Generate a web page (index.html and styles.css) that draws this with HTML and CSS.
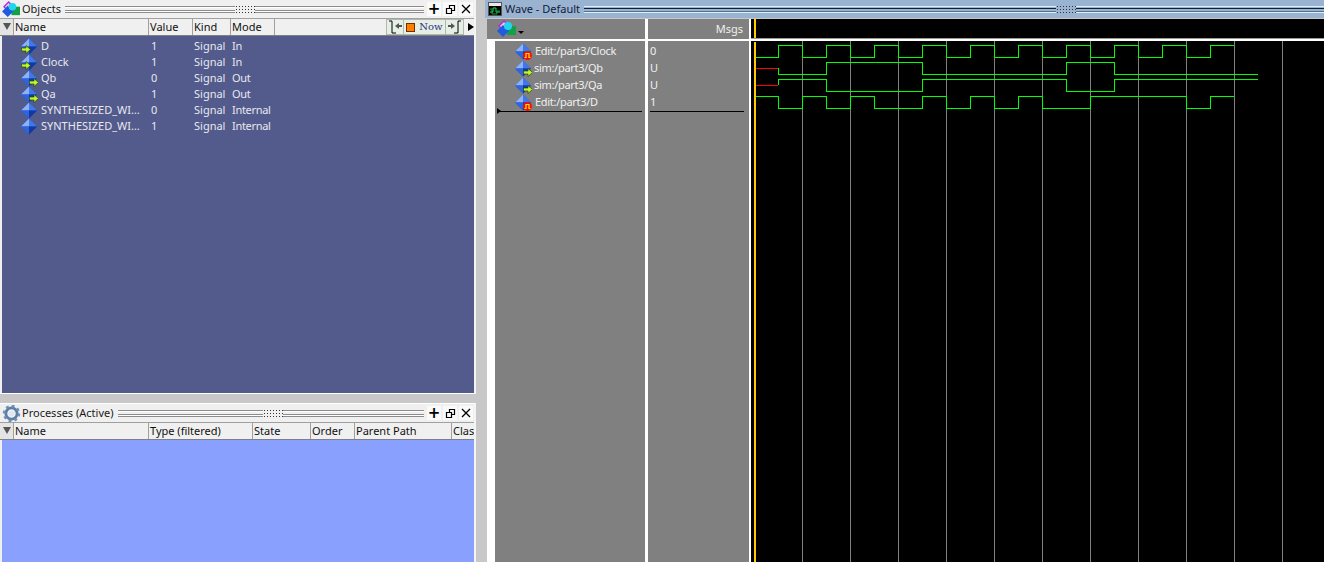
FILE: index.html
```html
<!DOCTYPE html>
<html>
<head>
	<title>Objects, Processes and Wave</title>
	<link rel="stylesheet" href="styles.css">
</head>
<body>
	<svg class="defs" width="0" height="0">
		<defs>
			<symbol id="diamond" viewBox="0 0 17 17">
				<polygon points="0,9 8,1 16,9 8,17" fill="#1d4fd0"/>
				<polygon points="8,1 16,9 8,9" fill="#3f78ee"/>
				<polygon points="0,9 8,1 8,9" fill="#8db2f6"/>
				<polygon points="0,9 8,9 8,17" fill="#2f63e0"/>
				<polygon points="8,9 16,9 8,17" fill="#123a9e"/>
			</symbol>
			<symbol id="arrow" viewBox="0 0 10 9">
				<path d="M0.500 3h4.500v-2.500l4.500 4-4.500 4v-2.500h-4.500z" fill="#c4f428" stroke="#1c4a08" stroke-width="0.700"/>
			</symbol>
			<symbol id="pulse" viewBox="0 0 9 9">
				<circle cx="4.500" cy="4.500" r="4.500" fill="#f01010"/>
				<path d="M1.500 6.500h1.500v-4h3v4h1.500" fill="none" stroke="#ffe000" stroke-width="1.200"/>
			</symbol>
			<symbol id="logo" viewBox="0 0 20 18">
				<polygon points="1,6 7,0 13,6 7,12" fill="#b32bd6"/>
				<polygon points="3,6 7,2 11,6 7,10" fill="#e8c4f2"/>
				<rect x="10" y="6" width="9" height="9" fill="#14a04a"/>
				<polygon points="0,11 6,5 12,11 6,17" fill="#1f5be0"/>
				<circle cx="11" cy="6" r="4" fill="#22d4ee"/>
			</symbol>
		</defs>
	</svg>

	<div class="left">
		<div class="panel objects">
			<div class="titlebar">
				<svg class="title-icon"><use href="#logo"/></svg>
				<span class="title">Objects</span>
				<div class="lines short"></div>
				<div class="dots"></div>
				<div class="lines"></div>
				<div class="btns">
					<span class="btn plus">+</span>
					<span class="btn"><svg width="11" height="11" viewBox="0 0 11 11"><path d="M1.500 4.500h5v5h-5zM4.500 4v-2.500h5v5h-3" fill="none" stroke="#000" stroke-width="1.200"/></svg></span>
					<span class="btn"><svg width="10" height="10" viewBox="0 0 10 10"><path d="M1 1l8 8M9 1l-8 8" fill="none" stroke="#000" stroke-width="1.300"/></svg></span>
				</div>
			</div>
			<div class="header">
				<span class="menu-cell"><i class="tri"></i></span>
				<span class="col c-name">Name</span>
				<span class="col c-value">Value</span>
				<span class="col c-kind">Kind</span>
				<span class="col c-mode">Mode</span>
				<div class="now-tools">
					<span class="tool"><svg width="14" height="14" viewBox="0 0 14 14"><path d="M1 1h3v12h4" fill="none" stroke="#000"/><path d="M7 6l4-3v2h3v2h-3v2z" fill="#555"/></svg></span>
					<span class="tool now"><i class="stop"></i>Now</span>
					<span class="tool"><svg width="14" height="14" viewBox="0 0 14 14"><path d="M13 1h-3v12h-4" fill="none" stroke="#000"/><path d="M7 6l-4-3v2h-3v2h3v2z" fill="#555"/></svg></span>
				</div>
				<i class="more"></i>
			</div>
			<div class="list">
				<div class="row"><svg class="sig"><use href="#diamond"/><use href="#arrow" x="0" y="8" width="10" height="9"/></svg><span class="c-name">D</span><span class="c-value">1</span><span class="c-kind">Signal</span><span>In</span></div>
				<div class="row"><svg class="sig"><use href="#diamond"/><use href="#arrow" x="0" y="8" width="10" height="9"/></svg><span class="c-name">Clock</span><span class="c-value">1</span><span class="c-kind">Signal</span><span>In</span></div>
				<div class="row"><svg class="sig"><use href="#diamond"/><use href="#arrow" x="8" y="9" width="10" height="9"/></svg><span class="c-name">Qb</span><span class="c-value">0</span><span class="c-kind">Signal</span><span>Out</span></div>
				<div class="row"><svg class="sig"><use href="#diamond"/><use href="#arrow" x="8" y="9" width="10" height="9"/></svg><span class="c-name">Qa</span><span class="c-value">1</span><span class="c-kind">Signal</span><span>Out</span></div>
				<div class="row"><svg class="sig"><use href="#diamond"/></svg><span class="c-name">SYNTHESIZED_WI…</span><span class="c-value">0</span><span class="c-kind">Signal</span><span>Internal</span></div>
				<div class="row"><svg class="sig"><use href="#diamond"/></svg><span class="c-name">SYNTHESIZED_WI…</span><span class="c-value">1</span><span class="c-kind">Signal</span><span>Internal</span></div>
			</div>
		</div>

		<div class="panel processes">
			<div class="titlebar">
				<svg class="title-icon" viewBox="0 0 18 18">
					<circle cx="9" cy="9" r="6" fill="none" stroke="#5b7fa8" stroke-width="3"/>
					<circle cx="9" cy="9" r="8" fill="none" stroke="#6f8fb4" stroke-width="2.500" stroke-dasharray="3 3.280"/>
					<circle cx="9" cy="9" r="3" fill="#dfe8f2"/>
				</svg>
				<span class="title">Processes (Active)</span>
				<div class="lines short2"></div>
				<div class="dots"></div>
				<div class="lines"></div>
				<div class="btns">
					<span class="btn plus">+</span>
					<span class="btn"><svg width="11" height="11" viewBox="0 0 11 11"><path d="M1.500 4.500h5v5h-5zM4.500 4v-2.500h5v5h-3" fill="none" stroke="#000" stroke-width="1.200"/></svg></span>
					<span class="btn"><svg width="10" height="10" viewBox="0 0 10 10"><path d="M1 1l8 8M9 1l-8 8" fill="none" stroke="#000" stroke-width="1.300"/></svg></span>
				</div>
			</div>
			<div class="header">
				<span class="menu-cell"><i class="tri"></i></span>
				<span class="col c-name">Name</span>
				<span class="col c-type">Type (filtered)</span>
				<span class="col c-state">State</span>
				<span class="col c-order">Order</span>
				<span class="col c-path">Parent Path</span>
				<span class="col c-class">Clas</span>
			</div>
			<div class="list"></div>
		</div>
	</div>

	<div class="wave">
		<div class="titlebar wave-title">
			<svg class="wave-icon" viewBox="0 0 14 14">
				<rect x="0.500" y="0.500" width="13" height="13" fill="#000" stroke="#555"/>
				<rect x="1" y="1" width="12" height="3" fill="#e8e8e8"/>
				<path d="M2 10h3v-4h3v4h4" fill="none" stroke="#20e060"/>
				<path d="M2 7h2v5h5v-3h3" fill="none" stroke="#10a040"/>
			</svg>
			<span class="title">Wave - Default</span>
			<div class="lines blue wave-short"></div>
			<div class="dots"></div>
			<div class="lines blue"></div>
		</div>
		<div class="wave-body">
			<div class="names">
				<div class="wave-head">
					<svg class="head-logo"><use href="#logo"/></svg>
					<i class="head-arrow"></i>
				</div>
				<div class="names-list">
					<div class="wave-row"><svg class="sig"><use href="#diamond"/><use href="#pulse" x="8" y="9" width="9" height="9"/></svg><span class="edit">Edit:/part3/Clock</span></div>
					<div class="wave-row"><svg class="sig"><use href="#diamond"/><use href="#arrow" x="8" y="9" width="10" height="9"/></svg><span>sim:/part3/Qb</span></div>
					<div class="wave-row"><svg class="sig"><use href="#diamond"/><use href="#arrow" x="8" y="9" width="10" height="9"/></svg><span>sim:/part3/Qa</span></div>
					<div class="wave-row"><svg class="sig"><use href="#diamond"/><use href="#pulse" x="8" y="9" width="9" height="9"/></svg><span class="edit">Edit:/part3/D</span></div>
					<div class="names-end"><i class="end-tri"></i></div>
				</div>
			</div>
			<div class="msgs">
				<div class="wave-head msgs-head">Msgs</div>
				<div class="msgs-list">
					<div class="msg-row">0</div>
					<div class="msg-row">U</div>
					<div class="msg-row">U</div>
					<div class="msg-row">1</div>
					<div class="msgs-end"></div>
				</div>
			</div>
			<svg class="plot" width="573" height="543" viewBox="751 19 573 543" shape-rendering="crispEdges">
				<g stroke="#808080" fill="none">
					<path d="M802.500 41V562M850.500 41V562M898.500 41V562M946.500 41V562M994.500 41V562M1042.500 41V562M1090.500 41V562M1138.500 41V562M1186.500 41V562M1234.500 41V562M1282.500 41V562"/>
				</g>
				<rect x="751" y="38" width="573" height="1" fill="#9a9a9a"/>
				<rect x="751" y="39" width="573" height="2" fill="#fff"/>
				<rect x="754" y="19" width="2" height="19" fill="#ffc800"/>
				<rect x="754" y="42" width="2" height="520" fill="#ffc800"/>
				<g fill="none" stroke="#00ff00">
					<path d="M756 57.500H778.500V45.500H802.500V57.500H826.500V45.500H850.500V57.500H874.500V45.500H898.500V57.500H922.500V45.500H946.500V57.500H970.500V45.500H994.500V57.500H1018.500V45.500H1042.500V57.500H1066.500V45.500H1090.500V57.500H1114.500V45.500H1138.500V57.500H1162.500V45.500H1186.500V57.500H1210.500V45.500H1234"/>
					<path d="M778.500 68V74.500H826.500V62.500H922.500V74.500H1066.500V62.500H1114.500V74.500H1258"/>
					<path d="M778.500 85V79.500H826.500V91.500H922.500V79.500H1066.500V91.500H1114.500V79.500H1258"/>
					<path d="M756 96.500H778.500V108.500H802.500V96.500H826.500V108.500H850.500V96.500H874.500V108.500H922.500V96.500H946.500V108.500H970.500V96.500H994.500V108.500H1018.500V96.500H1042.500V108.500H1090.500V96.500H1186.500V108.500H1210.500V96.500H1234"/>
				</g>
				<path d="M756 68.500H778M756 85.500H778" fill="none" stroke="#ff0000"/>
			</svg>
		</div>
	</div>
</body>
</html>
```

FILE: styles.css
```css
* {
	box-sizing: border-box;
}

body {
	margin: 0;
	height: 562px;
	overflow: hidden;
	display: flex;
	background: #c8c8c8;
	font-family: "Noto Sans", sans-serif;
	font-size: 11px;
	line-height: 16px;
}

.defs {
	display: block;
	width: 0;
	height: 0;
}

.left {
	width: 476px;
	height: 562px;
	flex: none;
	display: flex;
	flex-direction: column;
	margin-right: 9px;
}

.panel {
	display: flex;
	flex-direction: column;
	width: 476px;
	border-right: 2px solid #f4f4f4;
}

.objects {
	height: 394px;
	background: #f0f0f0;
	border-bottom: 1px solid #fff;
}

.processes {
	height: 159px;
	margin-top: 9px;
	background: #f0f0f0;
	border-top: 1px solid #fff;
}

.titlebar {
	height: 18px;
	flex: none;
	display: flex;
	align-items: center;
	background: #f0f0f0;
	color: #1a1a1a;
}

.title-icon {
	width: 19px;
	height: 17px;
	margin-left: 2px;
	flex: none;
}

.title {
	margin-left: 1px;
	margin-right: 4px;
	font-size: 11px;
	white-space: nowrap;
}

.lines {
	flex: 1;
	height: 7px;
	border-top: 1px solid #8c8c8c;
	border-bottom: 1px solid #8c8c8c;
	background: linear-gradient(#fff 0 1px, #f0f0f0 1px 3px, #8c8c8c 3px 4px, #fff 4px);
}

.short {
	flex: none;
	width: 170px;
}

.short2 {
	flex: none;
	width: 145px;
}

.dots {
	width: 20px;
	height: 9px;
	flex: none;
	background: radial-gradient(circle, #333 0 0.7px, transparent 0.8px) 0 0 / 3px 3px;
}

.btns {
	display: flex;
	gap: 2px;
	margin-left: 3px;
	margin-right: 1px;
}

.btn {
	width: 14px;
	height: 14px;
	display: flex;
	align-items: center;
	justify-content: center;
	background: #fafafa;
	color: #000;
}

.plus {
	font-family: "DejaVu Sans", sans-serif;
	font-size: 15px;
	font-weight: bold;
}

.header {
	height: 18px;
	flex: none;
	display: flex;
	align-items: center;
	background: #f0f0f0;
	border-top: 1px solid #a0a0a0;
	border-bottom: 1px solid #808080;
	color: #101010;
}

.menu-cell {
	width: 14px;
	height: 100%;
	flex: none;
	padding: 4px 0 0 3px;
	background: #e4e4e4;
	border-right: 1px solid #a0a0a0;
}

.tri {
	display: block;
	width: 0;
	height: 0;
	border-left: 4px solid transparent;
	border-right: 4px solid transparent;
	border-top: 7px solid #555;
}

.col {
	height: 100%;
	flex: none;
	padding-left: 1px;
	border-right: 1px solid #a0a0a0;
	white-space: nowrap;
	overflow: hidden;
}

.header .c-name { width: 135px; }
.header .c-value { width: 44px; }
.header .c-kind { width: 38px; }
.header .c-mode { width: 44px; }
.header .c-type { width: 104px; }
.header .c-state { width: 58px; }
.header .c-order { width: 44px; }
.header .c-path { width: 97px; }
.header .c-class { width: 22px; border-right: 0; }

.now-tools {
	display: flex;
	height: 16px;
	margin-left: 111px;
	background: #e6efe6;
	border: 1px solid #b0b8b0;
}

.tool {
	display: flex;
	align-items: center;
	justify-content: center;
	width: 17px;
	border-right: 1px solid #b0b8b0;
}

.tool:last-child {
	border-right: 0;
}

.now {
	width: 42px;
	gap: 4px;
	color: #303080;
	font-family: "DejaVu Serif", serif;
	font-size: 10px;
}

.stop {
	width: 9px;
	height: 9px;
	background: #ff8000;
	border: 1px solid #703000;
}

.more {
	width: 0;
	height: 0;
	margin-left: 4px;
	border-top: 4px solid transparent;
	border-bottom: 4px solid transparent;
	border-left: 6px solid #000;
}

.list {
	flex: 1;
	margin-left: 2px;
}

.objects .list {
	padding-top: 2px;
	background: #525b8c;
	color: #e8e8ee;
}

.processes .list {
	background: #8aa0ff;
}

.row {
	height: 16px;
	display: grid;
	grid-template-columns: 39px 110px 43px 38px 1fr;
	white-space: nowrap;
}

.row span:last-child {
	letter-spacing: -0.3px;
}

.row .sig {
	margin: -1px 0 0 19px;
}

.sig {
	width: 17px;
	height: 18px;
	flex: none;
}

.wave {
	flex: 1;
	height: 562px;
	display: flex;
	flex-direction: column;
	background: #fff;
}

.wave-title {
	height: 18px;
	background: #9ab3d0;
	color: #10203a;
}

.wave-icon {
	width: 14px;
	height: 14px;
	margin-left: 3px;
	flex: none;
}

.wave-title .title {
	margin-left: 3px;
}

.lines.blue {
	height: 7px;
	border-top: 1px solid #d8f0ff;
	border-bottom: 1px solid #d8f0ff;
	background: linear-gradient(#9ab3d0 0 1px, #10203a 1px 2px, #9ab3d0 2px 4px, #5a7088 4px 5px);
}

.wave-short {
	flex: none;
	width: 472px;
}

.wave-body {
	flex: 1;
	display: flex;
	border-top: 1px solid #c8c8c8;
}

.names {
	width: 160px;
	flex: none;
	border-left: 2px solid #c8c8c8;
}

.msgs {
	width: 101px;
	flex: none;
	margin-left: 3px;
}

.plot {
	flex: none;
	margin-left: 2px;
	background: #000;
	display: block;
}

.wave-head {
	height: 22px;
	display: flex;
	align-items: center;
	background: #808080;
	border-bottom: 2px solid #fff;
	color: #f0f0f0;
}

.head-logo {
	width: 20px;
	height: 18px;
	margin-left: 10px;
}

.head-arrow {
	width: 0;
	height: 0;
	margin: 6px 0 0 1px;
	border-left: 3px solid transparent;
	border-right: 3px solid transparent;
	border-top: 3px solid #000;
}

.msgs-head {
	justify-content: flex-end;
	padding-right: 6px;
}

.names-list {
	height: 521px;
	margin-left: 8px;
	padding-top: 1px;
	background: #808080;
	color: #f0f0f0;
	letter-spacing: -0.3px;
}

.wave-row {
	height: 17px;
	display: flex;
	align-items: center;
	padding-left: 20px;
	gap: 2px;
}

.wave-row .edit {
	margin-left: 1px;
}

.names-end {
	margin: 0 3px 0 2px;
	height: 2px;
	border-bottom: 1px solid #000;
	position: relative;
}

.end-tri {
	position: absolute;
	left: 0;
	top: -2px;
	width: 0;
	height: 0;
	border-top: 3px solid transparent;
	border-bottom: 3px solid transparent;
	border-left: 4px solid #000;
}

.msgs-list {
	height: 521px;
	padding-top: 1px;
	background: #808080;
	color: #f0f0f0;
}

.msg-row {
	height: 17px;
	padding-left: 2px;
	line-height: 17px;
}

.msgs-end {
	margin: 0 5px 0 2px;
	height: 2px;
	border-bottom: 1px solid #000;
}
```
